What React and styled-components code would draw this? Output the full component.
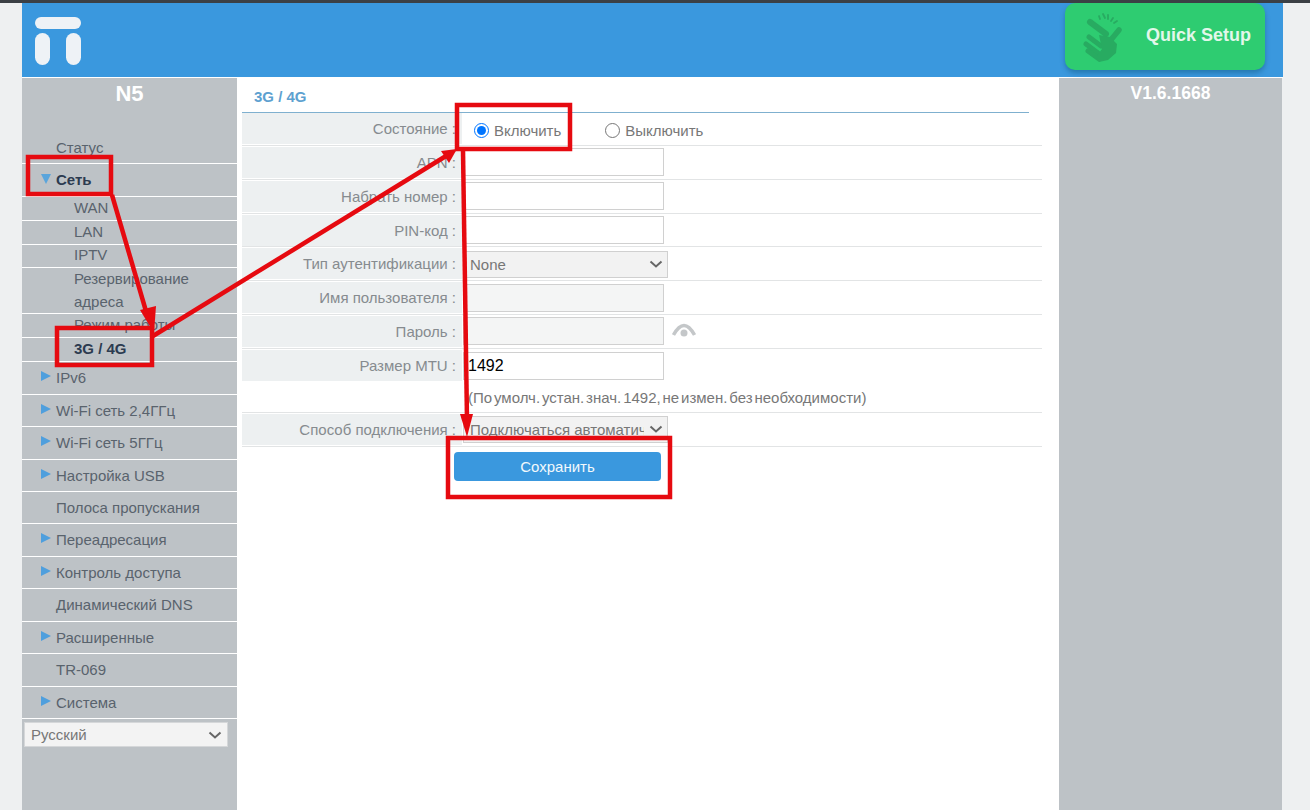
import React from "react";
import styled, { createGlobalStyle } from "styled-components";

const chevron = `url("data:image/svg+xml,%3Csvg xmlns='http://www.w3.org/2000/svg' width='14' height='8' viewBox='0 0 14 8'%3E%3Cpath d='M1.5 1.5 L7 6.5 L12.5 1.5' fill='none' stroke='%23666' stroke-width='2'/%3E%3C/svg%3E")`;

const Global = createGlobalStyle`
  html, body { margin: 0; padding: 0; height: 810px; overflow: hidden; background: #eef0f1; }
  body { font-family: "Liberation Sans", Arial, sans-serif; font-size: 15px; }
`;
const Page = styled.div`
  position: relative;
  width: 1310px;
  height: 810px;
  overflow: hidden;
  border-top: 3px solid #3b4045;
  box-sizing: border-box;
`;
const Frame = styled.div`
  margin-left: 22px;
  width: 1261px;
`;
const Header = styled.header`
  height: 74px;
  background: #3a98de;
  display: flex;
  justify-content: space-between;
  align-items: flex-start;
  border-bottom: 1px solid #fff;
`;
const Logo = styled.svg`
  width: 46px;
  height: 48px;
  margin: 14px 0 0 13px;
`;
const QuickSetup = styled.button`
  width: 200px;
  height: 67px;
  margin-right: 18px;
  border: 0;
  border-radius: 10px;
  background: #2ecc71;
  box-shadow: 0 3px 5px rgba(0, 60, 90, 0.35);
  display: flex;
  align-items: center;
  padding: 0 0 0 10px;
  font: bold 18px "Liberation Sans", Arial, sans-serif;
  color: #e2f7ea;
`;
const QuickLabel = styled.span`
  margin-left: 11px;
  margin-bottom: 2px;
  white-space: nowrap;
`;
const Columns = styled.div`
  display: flex;
  height: 732px;
`;
const Side = styled.aside`
  width: 215px;
  background: #bdc2c6;
  flex: none;
`;
const Model = styled.div`
  height: 31px;
  line-height: 32px;
  text-align: center;
  font-size: 22px;
  font-weight: bold;
  color: #fff;
`;
const MenuList = styled.nav`
  padding-top: 23px;
`;
const MenuItem = styled.div`
  display: flow-root;
  position: relative;
  height: ${(p) => p.$h || 32.45}px;
  box-sizing: border-box;
  padding-left: ${(p) => (p.$sub ? 52 : 34)}px;
  padding-right: 30px;
  line-height: ${(p) => (p.$sub ? 23 : 31)}px;
  color: ${(p) => (p.$active ? "#2c3b50" : "#59636d")};
  font-weight: ${(p) => (p.$active ? "bold" : "normal")};
  border-bottom: 1px solid #fff;
`;
const MenuText = styled.span`
  display: block;
  margin-top: -1.5px;
`;
const Caret = styled.i`
  position: absolute;
  left: 19px;
  top: ${(p) => (p.$open ? 10 : 9)}px;
  width: 0;
  height: 0;
  ${(p) =>
    p.$open
      ? "border-left: 5.5px solid transparent; border-right: 5.5px solid transparent; border-top: 10px solid #5aa5dc;"
      : "border-top: 5.5px solid transparent; border-bottom: 5.5px solid transparent; border-left: 10px solid #4f9fdd;"}
`;
const LangSelect = styled.select`
  display: block;
  appearance: none;
  width: 204px;
  height: 25px;
  margin: 3px 0 0 2px;
  padding: 0 22px 0 6px;
  border: 1px solid #d5d7d9;
  background: #f3f3f3 ${chevron} no-repeat right 5px center;
  color: #777;
  font: 15px "Liberation Sans", Arial, sans-serif;
`;
const Main = styled.main`
  width: 822px;
  flex: none;
  background: #fff;
  padding-left: 5px;
  box-sizing: border-box;
`;
const Title = styled.h2`
  width: 787px;
  height: 35px;
  margin: 0;
  box-sizing: border-box;
  padding: 11px 0 0 12px;
  border-bottom: 1px solid #7fb0cf;
  font-size: 15px;
  line-height: 16px;
  color: #5da1d0;
`;
const Form = styled.div`
  width: 800px;
  margin-top: -1px;
`;
const Row = styled.div`
  display: flex;
  height: 33.85px;
  box-sizing: border-box;
  border-bottom: ${(p) => (p.$plain ? "0" : "1px solid #e2e4e5")};
`;
const Label = styled.div`
  width: 220px;
  height: 31px;
  flex: none;
  margin-top: 1px;
  box-sizing: border-box;
  padding-right: 6px;
  background: #edf0f1;
  text-align: right;
  line-height: 31px;
  color: #868b8f;
`;
const Field = styled.div`
  display: flex;
  align-items: center;
  padding-left: 1px;
`;
const TextInput = styled.input`
  width: 201px;
  height: 28px;
  box-sizing: border-box;
  border: 1px solid #d0d0d0;
  padding: 0 4px;
  background: ${(p) => (p.disabled ? "#f4f5f5" : "#fff")};
  color: #000;
  font: 16px "Liberation Sans", Arial, sans-serif;
`;
const FormSelect = styled.select`
  appearance: none;
  width: 205px;
  height: 27px;
  margin-top: ${(p) => p.$mt || 0}px;
  padding: 0 23px 0 6px;
  box-sizing: border-box;
  border: 1px solid #d0d0d0;
  background: #f2f2f2 ${chevron} no-repeat right 4px center;
  color: #777;
  font: 15px "Liberation Sans", Arial, sans-serif;
`;
const RadioGroup = styled.label`
  display: inline-flex;
  align-items: center;
  margin-left: ${(p) => p.$ml}px;
  margin-top: 6px;
  color: #777;
  line-height: 16px;
`;
const Radio = styled.input`
  width: 15px;
  height: 15px;
  margin: 0 5px 2px 0;
`;
const EyeIcon = styled.svg`
  width: 24px;
  height: 16px;
  margin-left: 8px;
`;
const Hint = styled.div`
  padding: 6px 0 0 226px;
  height: 30px;
  box-sizing: border-box;
  color: #777;
  line-height: 17px;
  word-spacing: -2.3px;
  white-space: nowrap;
  border-bottom: 1px solid #e2e4e5;
`;
const SaveRow = styled.div`
  padding: 5px 0 0 212px;
`;
const SaveButton = styled.button`
  width: 207px;
  height: 29px;
  border: 0;
  border-radius: 4px;
  background: #3a98de;
  color: #f2f8fc;
  font: 15px "Liberation Sans", Arial, sans-serif;
`;
const RightSide = styled.aside`
  width: 223px;
  background: #bdc2c6;
  flex: none;
`;
const Version = styled.div`
  height: 30px;
  line-height: 31px;
  text-align: center;
  font-size: 17.5px;
  font-weight: bold;
  color: #fff;
`;
const Annotations = styled.svg`
  position: absolute;
  left: 0;
  top: -3px;
  width: 1310px;
  height: 810px;
  pointer-events: none;
`;

const menuBottom = [
  ["IPv6", true],
  ["Wi-Fi сеть 2,4ГГц", true],
  ["Wi-Fi сеть 5ГГц", true],
  ["Настройка USB", true],
  ["Полоса пропускания", false],
  ["Переадресация", true],
  ["Контроль доступа", true],
  ["Динамический DNS", false],
  ["Расширенные", true],
  ["TR-069", false],
  ["Система", true],
];

const subItems = [
  ["WAN", 23.8],
  ["LAN", 23.4],
  ["IPTV", 23.8],
  ["Резервирование адреса", 46],
  ["Режим работы", 23.8],
];

const Hand = () => (
  <svg width="60" height="60" viewBox="0 0 60 60" style={{ flex: "none" }}>
    <g fill="none" stroke="#28ab61" strokeLinecap="round">
      <path d="M15 15 L31 27" strokeWidth="6" />
      <path d="M44 23 L35 34" strokeWidth="5.5" />
      <g strokeWidth="5">
        <path d="M14 30 L26 39" />
        <path d="M11 37 L23 46" />
        <path d="M13 44 L24 52" />
      </g>
      <g strokeWidth="1.8">
        <path d="M24 9 L25 12" />
        <path d="M28 7 L30 11" />
        <path d="M33 8 L33 12" />
        <path d="M38 11 L36 14" />
        <path d="M42 14 L39 16" />
      </g>
    </g>
    <path d="M24 28 L35 30 L42 37 L41 46 L33 53 L24 55 L21 50 L27 42 Z" fill="#28ab61" />
  </svg>
);

export default function App() {
  return (
    <Page>
      <Global />
      <Frame>
        <Header>
          <Logo viewBox="0 0 46 48" fill="#eef2f6">
            <rect x="0" y="0" width="46" height="12" rx="6" />
            <rect x="0" y="16" width="15" height="32" rx="7.5" />
            <rect x="31" y="16" width="15" height="32" rx="7.5" />
          </Logo>
          <QuickSetup>
            <Hand />
            <QuickLabel>Quick Setup</QuickLabel>
          </QuickSetup>
        </Header>
        <Columns>
          <Side>
            <Model>N5</Model>
            <MenuList>
              <MenuItem>Статус</MenuItem>
              <MenuItem $active $h={33}>
                <Caret $open />
                Сеть
              </MenuItem>
              {subItems.map(([t, h]) => (
                <MenuItem key={t} $sub $h={h}>
                  <MenuText>{t}</MenuText>
                </MenuItem>
              ))}
              <MenuItem $sub $active $h={24}>
                <MenuText>3G / 4G</MenuText>
              </MenuItem>
              {menuBottom.map(([t, caret]) => (
                <MenuItem key={t}>
                  {caret && <Caret />}
                  {t}
                </MenuItem>
              ))}
            </MenuList>
            <LangSelect defaultValue="ru">
              <option value="ru">Русский</option>
            </LangSelect>
          </Side>
          <Main>
            <Title>3G / 4G</Title>
            <Form>
              <Row>
                <Label>Состояние :</Label>
                <Field>
                  <RadioGroup $ml={11}>
                    <Radio type="radio" name="st" defaultChecked />
                    Включить
                  </RadioGroup>
                  <RadioGroup $ml={44}>
                    <Radio type="radio" name="st" />
                    Выключить
                  </RadioGroup>
                </Field>
              </Row>
              <Row>
                <Label>APN :</Label>
                <Field><TextInput /></Field>
              </Row>
              <Row>
                <Label>Набрать номер :</Label>
                <Field><TextInput /></Field>
              </Row>
              <Row>
                <Label>PIN-код :</Label>
                <Field><TextInput /></Field>
              </Row>
              <Row>
                <Label>Тип аутентификации :</Label>
                <Field>
                  <FormSelect $mt={1} defaultValue="none">
                    <option value="none">None</option>
                  </FormSelect>
                </Field>
              </Row>
              <Row>
                <Label>Имя пользователя :</Label>
                <Field><TextInput disabled /></Field>
              </Row>
              <Row>
                <Label>Пароль :</Label>
                <Field>
                  <TextInput disabled />
                  <EyeIcon viewBox="0 0 24 16">
                    <path d="M1.5 12 Q12 -7 22.5 12" fill="none" stroke="#c4c7c9" strokeWidth="3.5" />
                    <circle cx="12" cy="10" r="3.5" fill="#c4c7c9" />
                  </EyeIcon>
                </Field>
              </Row>
              <Row $plain>
                <Label>Размер MTU :</Label>
                <Field><TextInput defaultValue="1492" /></Field>
              </Row>
              <Hint>(По умолч. устан. знач. 1492, не измен. без необходимости)</Hint>
              <Row>
                <Label>Способ подключения :</Label>
                <Field>
                  <FormSelect defaultValue="auto">
                    <option value="auto">Подключаться автоматически</option>
                  </FormSelect>
                </Field>
              </Row>
            </Form>
            <SaveRow>
              <SaveButton>Сохранить</SaveButton>
            </SaveRow>
          </Main>
          <RightSide>
            <Version>V1.6.1668</Version>
          </RightSide>
        </Columns>
      </Frame>
      <Annotations viewBox="0 0 1310 810">
        <g fill="none" stroke="#e60a10" strokeWidth="4.5">
          <rect x="28" y="157" width="83" height="37" />
          <rect x="57" y="328" width="95" height="37" />
          <rect x="457" y="105" width="113" height="44" />
          <rect x="448" y="438" width="222" height="59" />
          <path d="M112 195 L148 318" />
          <path d="M153 336 L446 156" />
          <path d="M463 150 L467 420" />
        </g>
        <g fill="#e60a10">
          <path d="M154 333 L140 310 L156 306 Z" />
          <path d="M457 149 L441 151 L449 163 Z" />
          <path d="M467 437 L460 414 L473 414 Z" />
        </g>
      </Annotations>
    </Page>
  );
}
